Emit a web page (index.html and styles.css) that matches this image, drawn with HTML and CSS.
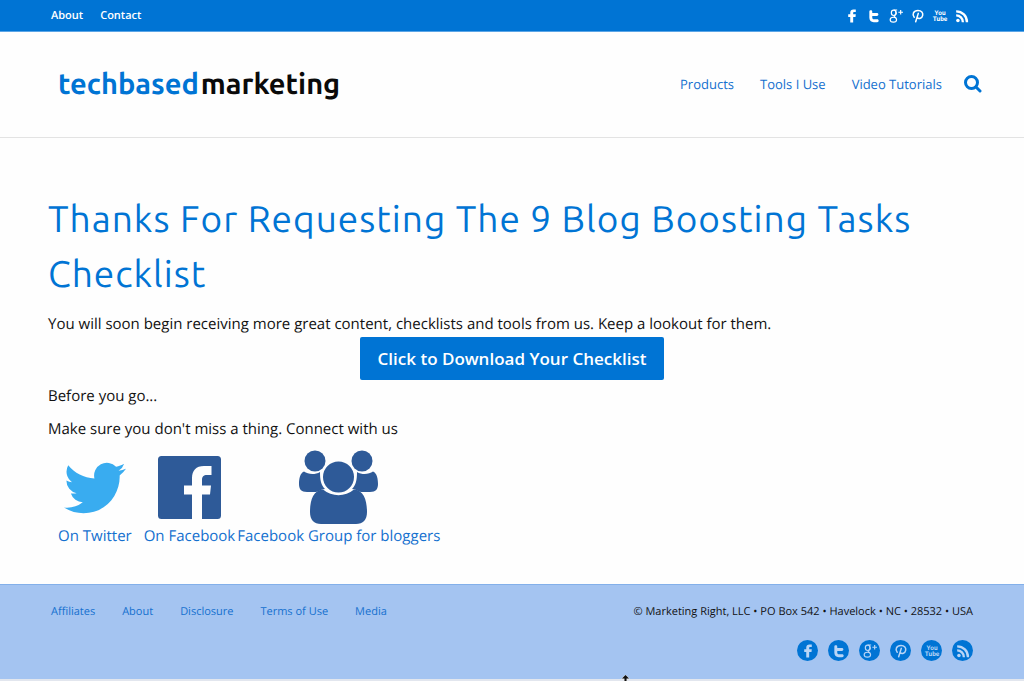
FILE: index.html
```html
<!DOCTYPE html>
<html lang="en">
<head>
<meta charset="utf-8">
<meta name="viewport" content="width=device-width, initial-scale=1">
<title>Tech Based Marketing</title>
<link rel="stylesheet" href="styles.css">
</head>
<body>
<svg class="sprite" aria-hidden="true">
  <symbol id="facebook" viewBox="0 0 24 24"><path d="M9 23V13.500H5.500V9H9V6.500C9 2.800 11.200 1 14.500 1H18.500V5.200H16C14.500 5.200 14 5.900 14 7V9H18.500L18 13.500H14V23Z"/></symbol>
  <symbol id="twitter" viewBox="0 0 24 24"><path d="M4 4.500C4 2.700 5 2 6.500 2S9 2.800 9 4.500V7H17C18.500 7 19.500 8 19.500 9.500S18.500 12 17 12H9V14.500C9 16.500 10 17.500 12 17.500H17.500C19 17.500 20 18.500 20 20S19 22.500 17.500 22.500H11.500C7 22.500 4 19.500 4 15Z"/></symbol>
  <symbol id="google" viewBox="0 0 24 24"><g fill="none" stroke="currentColor" stroke-width="2"><ellipse cx="8" cy="6.500" rx="4" ry="4.700"/><path d="M8 1.700H14M11 3.500C13 6 12.500 9 10 11C7.500 13 10 13.600 12 15.500"/><ellipse cx="7.500" cy="18.300" rx="5.500" ry="4.200"/><path d="M16 5.500H24M20 1.500V9.500"/></g></symbol>
  <symbol id="pinterest" viewBox="0 0 24 24"><path fill="none" stroke="currentColor" stroke-width="2.600" stroke-linecap="round" d="M5.500 14C1.500 9.500 4 2.500 12 2.500C18 2.500 21 6.500 20 11C19 16 13.500 18 10.500 14.500M12.500 7.500L8 22"/></symbol>
  <symbol id="rss" viewBox="0 0 24 24"><circle cx="5" cy="19.500" r="3"/><path fill="none" stroke="currentColor" stroke-width="4" d="M2 11C8.500 11 13.500 16 13.500 22.500M2 4C12.500 4 20.500 12 20.500 22.500"/></symbol>
</svg>

<div class="topbar">
  <nav class="topbar-nav" aria-label="Secondary">
    <a href="#">About</a>
    <a href="#">Contact</a>
  </nav>
  <div class="social">
    <a href="#" aria-label="Facebook"><svg><use href="#facebook"/></svg></a>
    <a href="#" aria-label="Twitter"><svg><use href="#twitter"/></svg></a>
    <a href="#" aria-label="Google Plus"><svg><use href="#google"/></svg></a>
    <a href="#" aria-label="Pinterest"><svg><use href="#pinterest"/></svg></a>
    <a href="#" aria-label="YouTube"><svg class="yt" viewBox="0 0 24 24"><text x="12" y="11" text-anchor="middle">You</text><text x="12" y="21" text-anchor="middle">Tube</text></svg></a>
    <a href="#" aria-label="RSS"><svg><use href="#rss"/></svg></a>
  </div>
</div>

<header class="header">
  <a class="logo" href="#"><span class="logo-tech">techbased</span><span>marketing</span></a>
  <nav class="main-nav" aria-label="Main">
    <a href="#">Products</a>
    <a href="#">Tools I Use</a>
    <a href="#">Video Tutorials</a>
    <button class="search" type="button" aria-label="Search">
      <svg viewBox="0 0 18 18"><circle cx="7.500" cy="7.500" r="6"/><path d="M12 12L16 16"/></svg>
    </button>
  </nav>
</header>

<main class="content">
  <h1>Thanks For Requesting The 9 Blog Boosting Tasks Checklist</h1>
  <p>You will soon begin receiving more great content, checklists and tools from us. Keep a lookout for them.</p>
  <button class="download" type="button">Click to Download Your Checklist</button>
  <p class="before">Before you go...</p>
  <p>Make sure you don't miss a thing. Connect with us</p>
  <div class="connect">
    <a class="connect-twitter" href="#">
      <svg class="bird" viewBox="0 2 24 20"><path d="M23.953 4.570a10 10 0 01-2.825.775 4.958 4.958 0 002.163-2.723c-.951.555-2.005.959-3.127 1.184a4.920 4.920 0 00-8.384 4.482C7.690 8.095 4.067 6.130 1.640 3.162a4.822 4.822 0 00-.666 2.475c0 1.710.870 3.213 2.188 4.096a4.904 4.904 0 01-2.228-.616v.060a4.923 4.923 0 003.946 4.827 4.996 4.996 0 01-2.212.085 4.936 4.936 0 004.604 3.417 9.867 9.867 0 01-6.102 2.105c-.390 0-.779-.023-1.170-.067a13.995 13.995 0 007.557 2.209c9.053 0 13.998-7.496 13.998-13.985 0-.210 0-.420-.015-.630A9.935 9.935 0 0024 4.590z"/></svg>
      <span>On Twitter</span>
    </a>
    <a href="#">
      <svg class="fb" viewBox="0 0 63 63"><path fill-rule="evenodd" d="M3.500 0H59.500Q63 0 63 3.500V59.500Q63 63 59.500 63H44V38.500H52L53 29.500H44V24C44 20.500 45.500 19 49 19H53.500V10H46C38 10 34 14.500 34 22V29.500H26V38.500H34V63H3.500Q0 63 0 59.500V3.500Q0 0 3.500 0Z"/></svg>
      <span>On Facebook</span>
    </a>
    <a href="#">
      <svg class="group" viewBox="0 0 79 74"><circle cx="16" cy="11" r="10.500"/><circle cx="63" cy="11" r="10.500"/><path d="M5 21.500C9 24.500 16 25 21 22C21 30 22 35 26 39C22 39 19 42 17 42H8C2 42 0 39 0 34C0 29 1 23 5 21.500Z"/><path d="M74 21.500C70 24.500 63 25 58 22C58 30 57 35 53 39C57 39 60 42 62 42H71C77 42 79 39 79 34C79 29 78 23 74 21.500Z"/><circle cx="39.500" cy="27" r="15.500"/><path d="M24 39.500C33 47 46 47 55 39.500C65 40 68 51 68 62C68 70 64 74 57 74H22C15 74 11 70 11 62C11 51 14 40 24 39.500Z"/></svg>
      <span>Facebook Group for bloggers</span>
    </a>
  </div>
</main>

<footer class="footer">
  <nav class="footer-nav" aria-label="Footer">
    <a href="#">Affiliates</a>
    <a href="#">About</a>
    <a href="#">Disclosure</a>
    <a href="#">Terms of Use</a>
    <a href="#">Media</a>
  </nav>
  <div class="footer-side">
    <div>© Marketing Right, LLC • PO Box 542 • Havelock • NC • 28532 • USA</div>
    <div class="social social-round">
      <a href="#" aria-label="Facebook"><svg><use href="#facebook"/></svg></a>
      <a href="#" aria-label="Twitter"><svg><use href="#twitter"/></svg></a>
      <a href="#" aria-label="Google Plus"><svg><use href="#google"/></svg></a>
      <a href="#" aria-label="Pinterest"><svg><use href="#pinterest"/></svg></a>
      <a href="#" aria-label="YouTube"><svg class="yt" viewBox="0 0 24 24"><text x="12" y="11" text-anchor="middle">You</text><text x="12" y="21" text-anchor="middle">Tube</text></svg></a>
      <a href="#" aria-label="RSS"><svg><use href="#rss"/></svg></a>
    </div>
  </div>
  <svg class="cursor" viewBox="0 0 9 6" aria-hidden="true"><path d="M4.500 0L8 3.500H5.500V6H3.500V3.500H1Z"/></svg>
</footer>
</body>
</html>
```
FILE: styles.css
```css
* { box-sizing: border-box; }

body {
  margin: 0;
  min-height: 100vh;
  display: flex;
  flex-direction: column;
  background: #fefefe;
  color: #111;
  font: 15px/24px "Open Sans", "Noto Sans", sans-serif;
  text-rendering: geometricPrecision;
}

a { color: #1470cf; text-decoration: none; }

button { border: 0; cursor: pointer; font-family: inherit; }

.sprite { position: absolute; width: 0; height: 0; }

.topbar {
  display: flex;
  justify-content: space-between;
  align-items: center;
  height: 32px;
  padding: 0 55px 0 51px;
  background: #0074d4;
  border-bottom: 1px solid #5ba5e6;
}

.topbar-nav {
  display: flex;
  gap: 17px;
  font-size: 11px;
  font-weight: 600;
}

.topbar-nav a { color: #fff; }

.social { display: flex; gap: 8px; }

.social a { display: flex; color: #fff; }

.social svg { width: 14px; height: 14px; fill: currentColor; }

.social .yt {
  overflow: visible;
  font: bold 11px Roboto, sans-serif;
}

.header {
  display: flex;
  justify-content: space-between;
  align-items: center;
  height: 106px;
  padding: 0 42px 1px 58px;
  border-bottom: 1px solid #e3e3e3;
}

.logo {
  display: flex;
  gap: 2px;
  color: #0a0a0a;
  font: 600 29px/40px "Ubuntu", "Noto Sans", sans-serif;
}

.logo-tech { color: #0074d4; }

.main-nav {
  display: flex;
  align-items: center;
  gap: 26px;
  font-size: 13px;
}

.search {
  width: 18px;
  height: 18px;
  margin-left: -4px;
  padding: 0;
  background: none;
}

.search svg {
  display: block;
  fill: none;
  stroke: #0074d4;
  stroke-width: 3;
  stroke-linecap: round;
}

.content {
  flex: 1;
  display: flex;
  flex-direction: column;
  padding: 53px 48px 34px;
}

h1 {
  margin: 0 0 11px;
  color: #0074d4;
  font: 400 37px/55px "Ubuntu", "Noto Sans", sans-serif;
  letter-spacing: 1px;
}

p { margin: 0 0 9px; }

.content h1 + p { margin: 0 0 1px; }

.download {
  align-self: center;
  padding: 8px 18px;
  border-radius: 2px;
  background: #0074d4;
  color: #fff;
  font-size: 17px;
  font-weight: 600;
  line-height: 27px;
}

.before { margin-top: 4px; }

.connect {
  display: flex;
  align-items: flex-end;
  gap: 2px;
}

.connect a {
  display: flex;
  flex-direction: column;
  align-items: center;
}

.connect-twitter { padding: 0 10px; }

.bird { width: 62px; height: 52px; margin-bottom: 10px; fill: #39acf0; }

.fb { width: 63px; height: 63px; margin-bottom: 5px; fill: #2e5a98; }

.group { width: 79px; height: 74px; fill: #2e5a98; }

.footer {
  position: relative;
  display: flex;
  justify-content: space-between;
  padding: 18px 51px;
  background: #a4c4f1;
  border-top: 1px solid #83b0ea;
  border-bottom: 2px solid #e2e6ee;
  font-size: 11px;
  line-height: 18px;
}

.footer-nav { display: flex; gap: 27px; }

.footer-side {
  display: flex;
  flex-direction: column;
  align-items: flex-end;
  gap: 19px;
}

.social-round { gap: 10px; }

.social-round a {
  width: 21px;
  height: 21px;
  align-items: center;
  justify-content: center;
  border-radius: 50%;
  background: #0074d4;
  color: #b9d5f6;
}

.cursor {
  position: absolute;
  bottom: -2px;
  left: 61%;
  width: 9px;
  height: 6px;
  margin-left: -4px;
  fill: #111;
  stroke: #ddd;
  stroke-width: 1;
  paint-order: stroke;
}
```
